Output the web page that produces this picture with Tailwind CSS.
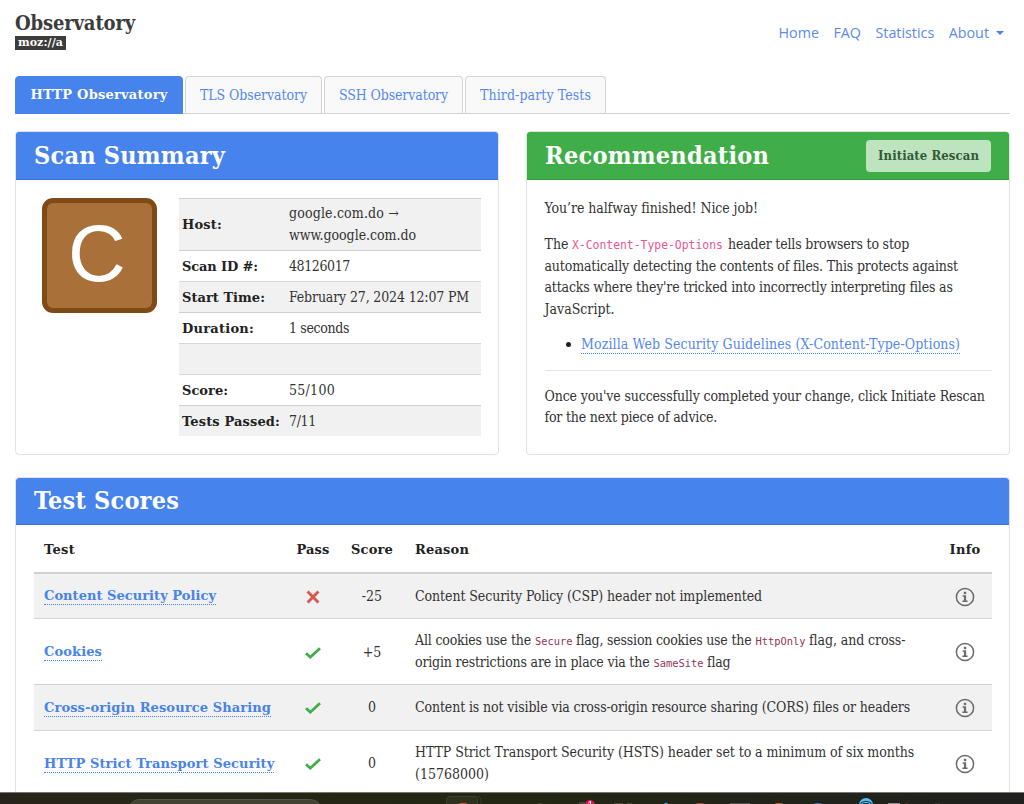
<!DOCTYPE html>
<html lang="en">
<head>
<meta charset="utf-8">
<title>Mozilla Observatory</title>
<script src="https://cdn.jsdelivr.net/npm/@tailwindcss/browser@4"></script>
</head>
<body class="bg-white">
<svg class="hidden">
  <symbol id="check" viewBox="0 0 18 14"><path d="M2 7.2 6.3 11.2 16 2.2" fill="none" stroke="#3fae49" stroke-width="2.8"/></symbol>
  <symbol id="cross" viewBox="0 0 16 16"><path d="M1.8 1.8 14.2 14.2M14.2 1.8 1.8 14.2" fill="none" stroke="#dc5550" stroke-width="3.3"/></symbol>
  <symbol id="info" viewBox="0 0 20 20"><circle cx="10" cy="10" r="8.6" fill="none" stroke="#6b6b6b" stroke-width="1.5"/><rect x="8.8" y="4.8" width="2.4" height="2.3" fill="#6b6b6b"/><path d="M7.6 8.3H11.1V13.4H12.6V14.9H7.4V13.4H8.9V9.7H7.6Z" fill="#6b6b6b"/></symbol>
</svg>
<div class="flex h-[804px] w-[1024px] flex-col overflow-hidden whitespace-nowrap font-['DejaVu_Serif_Condensed','DejaVu_Serif',serif] text-[14px] leading-[21.5px] text-[#333]">

  <header class="flex h-[76px] shrink-0 justify-between pl-[15px] pr-[20px]">
    <div class="pt-[11px] text-[#3c3c3c]">
      <div class="h-[25px] text-[20px] font-bold leading-[25px] tracking-[-0.15px]">Observatory</div>
      <div class="flex h-[14px] w-[51px] items-center justify-center bg-[#3c3c3c] font-['DejaVu_Serif',serif] text-[11px] font-bold leading-[14px] tracking-[0.08px] text-white">moz://a</div>
    </div>
    <nav class="flex items-start gap-[14.5px] pt-[22px] font-['Open_Sans','Noto_Sans',sans-serif] text-[14.3px] leading-[21px] text-[#5a8aee]">
      <a>Home</a><a>FAQ</a><a>Statistics</a>
      <a class="flex items-center gap-[7px]">About
        <svg class="h-[4px] w-[8px]" viewBox="0 0 8 4"><path d="M0 0H8L4 4Z" fill="#4783ec"/></svg></a>
    </nav>
  </header>

  <div class="ml-[15px] mr-[14px] flex h-[38px] shrink-0 gap-[2px] border-b border-[#d2d2d2] text-[#5589ee]">
    <a class="-mb-px flex w-[168px] items-center justify-center rounded-t-[4px] border border-[#4783ec] bg-[#4783ec] font-['DejaVu_Serif',serif] text-[13px] font-bold tracking-[0.23px] text-white">HTTP Observatory</a>
    <a class="flex w-[137px] items-center justify-center rounded-t-[4px] border border-b-0 border-[#d4d4d4] bg-[#f9f9f9] pt-px tracking-[-0.07px]">TLS Observatory</a>
    <a class="flex w-[139px] items-center justify-center rounded-t-[4px] border border-b-0 border-[#d4d4d4] bg-[#f9f9f9] pt-px tracking-[-0.11px]">SSH Observatory</a>
    <a class="flex w-[141px] items-center justify-center rounded-t-[4px] border border-b-0 border-[#d4d4d4] bg-[#f9f9f9] pt-px tracking-[0.1px]">Third-party Tests</a>
  </div>

  <div class="ml-[15px] mr-[14px] mt-[17px] flex h-[324px] shrink-0 justify-between">
    <section class="w-[484px] rounded-[4px] border border-[#e2e2e2]">
      <h2 class="flex h-[48px] items-center rounded-t-[3px] border-b border-[#3c74dc] bg-[#4783ec] pl-[18px] text-[25px] font-bold tracking-[0.22px] text-white">Scan Summary</h2>
      <div class="flex pl-[26px] pt-[18px]">
        <div class="flex h-[115px] w-[115px] items-center justify-center rounded-[11px] border-[5px] border-[#804a17] bg-[#a97039] font-['Liberation_Sans',sans-serif] text-[80px] leading-none text-white"><span class="mb-[3px] mr-[5px]">C</span></div>
        <div class="ml-[22px] w-[302px] text-[#333]">
          <div class="flex h-[52px] items-center border-t border-[#d0d0d0] bg-[#f1f1f1]"><b class="w-[110px] pl-[3px] font-['DejaVu_Serif',serif] text-[13px] tracking-[0.18px] text-[#222]">Host:</b><span><span class="block tracking-[0.16px]">google.com.do →</span><span class="block tracking-[-0.04px]">www.google.com.do</span></span></div>
          <div class="flex h-[31px] items-center border-t border-[#d0d0d0] pt-px"><b class="w-[110px] pl-[3px] font-['DejaVu_Serif',serif] text-[13px] tracking-[-0.13px] text-[#222]">Scan ID #:</b><span class="tracking-[-0.39px]">48126017</span></div>
          <div class="flex h-[31px] items-center border-t border-[#d8d8d8] bg-[#f1f1f1] pt-px"><b class="w-[110px] pl-[3px] font-['DejaVu_Serif',serif] text-[13px] tracking-[0.03px] text-[#222]">Start Time:</b><span class="tracking-[-0.15px]">February 27, 2024 12:07 PM</span></div>
          <div class="flex h-[31px] items-center border-t border-[#d0d0d0] pt-px"><b class="w-[110px] pl-[3px] font-['DejaVu_Serif',serif] text-[13px] tracking-[0.24px] text-[#222]">Duration:</b><span class="tracking-[-0.35px]">1 seconds</span></div>
          <div class="h-[32px] border-y border-[#d8d8d8] bg-[#f1f1f1]"></div>
          <div class="flex h-[30px] items-center pt-px"><b class="w-[110px] pl-[3px] font-['DejaVu_Serif',serif] text-[13px] tracking-[0.02px] text-[#222]">Score:</b><span class="tracking-[0.28px]">55/100</span></div>
          <div class="flex h-[31px] items-center border-t border-[#d0d0d0] bg-[#f1f1f1] pt-px"><b class="w-[110px] pl-[3px] font-['DejaVu_Serif',serif] text-[13px] tracking-[0.13px] text-[#222]">Tests Passed:</b><span class="tracking-[-0.32px]">7/11</span></div>
        </div>
      </div>
    </section>

    <section class="w-[484px] rounded-[4px] border border-[#e2e2e2]">
      <div class="flex h-[48px] items-center justify-between rounded-t-[3px] border-b border-[#379b40] bg-[#3fae49] pl-[18px] pr-[18px]">
        <h2 class="text-[25px] font-bold tracking-[0.25px] text-white">Recommendation</h2>
        <button class="flex h-[32px] w-[125px] items-center justify-center rounded-[4px] bg-[#bde3bf] text-[13px] font-bold tracking-[0.09px] text-[#315a35]">Initiate Rescan</button>
      </div>
      <div class="pl-[17.5px] pr-[17px] pt-[18px]">
        <p class="tracking-[-0.08px]">You’re halfway finished! Nice job!</p>
        <div class="mt-[14.5px]">
          <div class="flex h-[21.5px]"><span class="w-[27.5px]">The</span><code class="w-[156px] pt-px font-['DejaVu_Sans_Mono',monospace] text-[11.4px] text-[#e8578f]">X-Content-Type-Options</code><span class="tracking-[-0.18px]">header tells browsers to stop</span></div>
          <div class="tracking-[-0.15px]">automatically detecting the contents of files. This protects against</div>
          <div class="tracking-[-0.18px]">attacks where they're tricked into incorrectly interpreting files as</div>
          <div>JavaScript.</div>
        </div>
        <div class="mt-[15px] flex items-center pl-[21px] text-[#5589ee]"><span class="mr-[10.5px] h-[5px] w-[5px] rounded-full bg-[#222]"></span><a class="h-[19px] border-b border-dotted border-[#4783ec] leading-[19px] tracking-[0.1px]">Mozilla Web Security Guidelines (X-Content-Type-Options)</a></div>
        <div class="mt-[15.5px] h-px bg-[#e5e5e5]"></div>
        <div class="mt-[15px]"><div class="tracking-[-0.15px]">Once you've successfully completed your change, click Initiate Rescan</div><div class="tracking-[-0.19px]">for the next piece of advice.</div></div>
      </div>
    </section>
  </div>

  <section class="ml-[15px] mr-[14px] mt-[22px] flex min-h-0 flex-1 flex-col overflow-hidden rounded-t-[4px] border border-b-0 border-[#e2e2e2]">
    <h2 class="flex h-[47px] shrink-0 items-center rounded-t-[3px] border-b border-[#3c74dc] bg-[#4783ec] pl-[18px] text-[25px] font-bold tracking-[0.2px] text-white">Test Scores</h2>
    <div class="ml-[18px] mr-[17px]">
      <div class="flex h-[49px] items-center border-b-2 border-[#d0d0d0] pt-[3px] font-['DejaVu_Serif',serif] text-[13px] font-bold text-[#222]">
        <span class="w-[253px] pl-[10px] tracking-[0.31px]">Test</span><span class="w-[52px] text-center tracking-[0.13px]">Pass</span><span class="w-[66px] text-center tracking-[0.18px]">Score</span><span class="flex-1 pl-[10px] tracking-[0.18px]">Reason</span><span class="w-[54px] text-center tracking-[0.3px]">Info</span>
      </div>
      <div class="flex h-[45px] items-center border-b border-[#d6d6d6] bg-[#f1f1f1]">
        <div class="flex w-[253px] pl-[10px]"><a class="h-[18px] border-b border-dotted border-[#4783ec] font-['DejaVu_Serif',serif] text-[13px] font-bold leading-[18px] tracking-[0.04px] text-[#4783ec]">Content Security Policy</a></div>
        <div class="flex w-[52px] justify-center"><svg class="mt-[2px] h-[14px] w-[14px]"><use href="#cross"/></svg></div><span class="w-[66px] pt-px text-center">-25</span>
        <div class="flex-1 pl-[10px] pt-px tracking-[-0.09px]">Content Security Policy (CSP) header not implemented</div>
        <div class="flex w-[54px] justify-center"><svg class="mt-[1px] h-[20px] w-[20px]"><use href="#info"/></svg></div>
      </div>
      <div class="flex h-[66px] items-center border-b border-[#d0d0d0]">
        <div class="flex w-[253px] pl-[10px]"><a class="h-[19px] border-b border-dotted border-[#4783ec] font-['DejaVu_Serif',serif] text-[13px] font-bold leading-[19px] tracking-[0.11px] text-[#4783ec]">Cookies</a></div>
        <div class="flex w-[52px] justify-center"><svg class="mt-[2px] h-[14px] w-[18px]"><use href="#check"/></svg></div><span class="w-[66px] pt-[2px] text-center">+5</span>
        <div class="flex-1 pl-[10px]">
          <div class="flex h-[21.5px]"><span class="w-[120px] tracking-[-0.19px]">All cookies use the</span><code class="w-[41px] pt-px font-['DejaVu_Sans_Mono',monospace] text-[10.4px] text-[#93355a]">Secure</code><span class="w-[179.5px] tracking-[-0.2px]">flag, session cookies use the</span><code class="w-[53.5px] pt-px font-['DejaVu_Sans_Mono',monospace] text-[10.4px] text-[#93355a]">HttpOnly</code><span class="tracking-[-0.09px]">flag, and cross-</span></div>
          <div class="flex h-[21.5px]"><span class="w-[238.5px] tracking-[-0.18px]">origin restrictions are in place via the</span><code class="w-[53.5px] pt-px font-['DejaVu_Sans_Mono',monospace] text-[10.4px] text-[#93355a]">SameSite</code><span class="tracking-[-0.2px]">flag</span></div>
        </div>
        <div class="flex w-[54px] justify-center"><svg class="mt-[1px] h-[20px] w-[20px]"><use href="#info"/></svg></div>
      </div>
      <div class="flex h-[46px] items-center border-b border-[#d6d6d6] bg-[#f1f1f1]">
        <div class="flex w-[253px] pl-[10px]"><a class="h-[18px] border-b border-dotted border-[#4783ec] font-['DejaVu_Serif',serif] text-[13px] font-bold leading-[18px] tracking-[0.1px] text-[#4783ec]">Cross-origin Resource Sharing</a></div>
        <div class="flex w-[52px] justify-center"><svg class="mt-[1px] h-[14px] w-[18px]"><use href="#check"/></svg></div><span class="w-[66px] text-center">0</span>
        <div class="flex-1 pl-[10px] tracking-[-0.13px]">Content is not visible via cross-origin resource sharing (CORS) files or headers</div>
        <div class="flex w-[54px] justify-center"><svg class="mt-[1px] h-[20px] w-[20px]"><use href="#info"/></svg></div>
      </div>
      <div class="flex h-[65px] items-center">
        <div class="flex w-[253px] pl-[10px]"><a class="h-[18px] border-b border-dotted border-[#4783ec] font-['DejaVu_Serif',serif] text-[13px] font-bold leading-[18px] tracking-[0.1px] text-[#4783ec]">HTTP Strict Transport Security</a></div>
        <div class="flex w-[52px] justify-center"><svg class="mt-[1px] h-[14px] w-[18px]"><use href="#check"/></svg></div><span class="w-[66px] text-center">0</span>
        <div class="flex-1 pl-[10px]"><div class="tracking-[-0.07px]">HTTP Strict Transport Security (HSTS) header set to a minimum of six months</div><div>(15768000)</div></div>
        <div class="flex w-[54px] justify-center"><svg class="mt-[1px] h-[20px] w-[20px]"><use href="#info"/></svg></div>
      </div>
    </div>
  </section>

  <footer class="h-[12px] shrink-0 border-t border-[#77786f] bg-gradient-to-r from-[#29241b] via-[#232713] to-[#20201f]">
    <svg class="block h-[11px] w-full" viewBox="0 793 1024 11">
      <path d="M129 806Q133 799.5 140 799.5H309Q317 799.5 321 806Z" fill="#424333" stroke="#55574a"/>
      <path d="M478 796Q482 798 481 804" fill="none" stroke="#383c29"/>
      <rect x="446.5" y="796.5" width="31" height="20" rx="3" fill="#2d321f" stroke="#3b402d"/>
      <ellipse cx="463" cy="805" rx="5" ry="2.3" fill="#dc432d"/>
      <path d="M538 804h4m37-1h6" stroke="#574f45" stroke-width="1.5"/>
      <circle cx="590" cy="805" r="5" fill="#d9164f"/><path d="M588.5 803 590.5 801V804" stroke="#fff" fill="none"/>
      <path d="M614 804h9m4 0h5" stroke="#4c4936" stroke-width="2"/>
      <circle cx="666" cy="805" r="2.3" fill="#28a9c5"/>
      <ellipse cx="700" cy="805" rx="5" ry="2" fill="#d9462d"/>
      <path d="M730 804h20" stroke="#505050" stroke-width="2"/>
      <ellipse cx="779" cy="805" rx="5" ry="2" fill="#df6632"/>
      <ellipse cx="818" cy="805" rx="5" ry="2" fill="#4377d1"/>
      <circle cx="866" cy="805" r="7" fill="#55bff0"/><path d="M861 804V802.5Q866 800 871 802.5V804M863 803.5h6" stroke="#193442" fill="none"/>
      <path d="M888 804h12" stroke="#8b8b8b" stroke-width="2"/><path d="M905 804h3" stroke="#713129"/><path d="M935 804h5" stroke="#4b4b4b"/>
    </svg>
  </footer>
</div>
</body>
</html>
